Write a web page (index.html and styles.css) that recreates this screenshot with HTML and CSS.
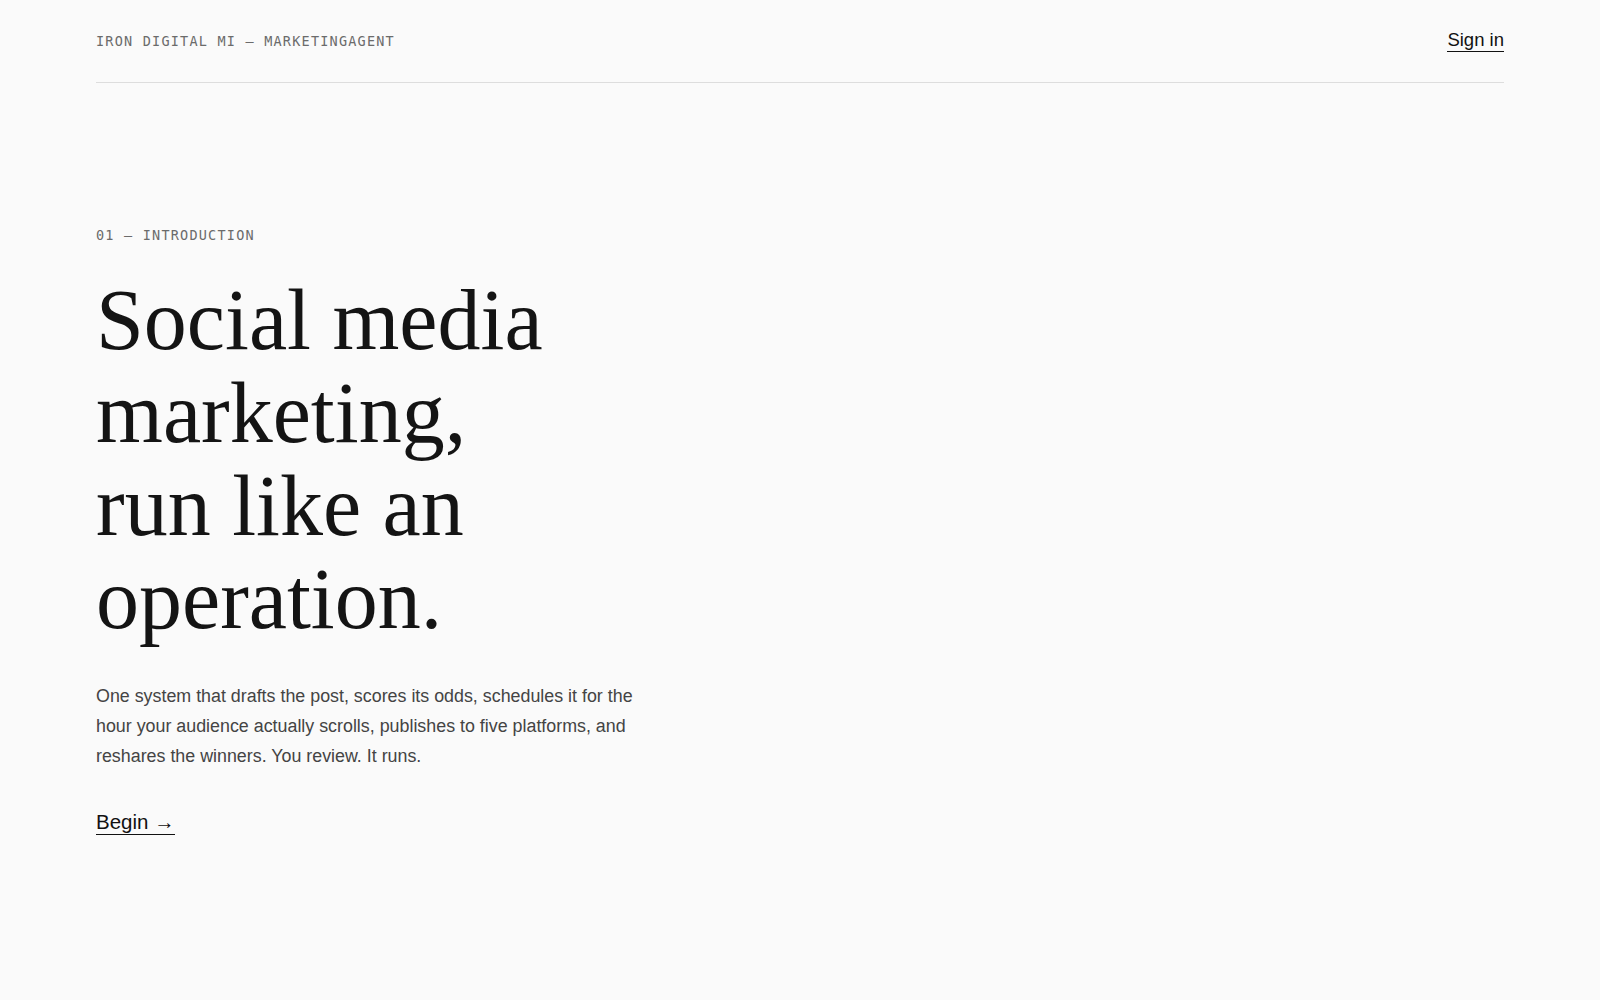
FILE: index.html
```html
<!DOCTYPE html>
<html lang="en">
<head>
<meta charset="utf-8">
<title>Iron Digital MI — Marketingagent</title>
<link rel="stylesheet" href="styles.css">
</head>
<body>
<div class="page">
  <header class="topbar">
    <div class="brand">IRON DIGITAL MI — MARKETINGAGENT</div>
    <a class="signin" href="#">Sign in</a>
  </header>
  <main class="hero">
    <div class="eyebrow">01 — INTRODUCTION</div>
    <h1 class="title">
      <span class="line">Social media</span>
      <span class="line">marketing,</span>
      <span class="line">run like an</span>
      <span class="line">operation.</span>
    </h1>
    <p class="lede">One system that drafts the post, scores its odds, schedules it for the hour your audience actually scrolls, publishes to five platforms, and reshares the winners. You review. It runs.</p>
    <div class="cta-row">
      <a class="cta" href="#">Begin <span class="arrow">→</span></a>
    </div>
  </main>
</div>
</body>
</html>
```

FILE: styles.css
```css
html, body {
  margin: 0;
  padding: 0;
  background: #fafafa;
}

body {
  font-family: "Liberation Sans", Arial, sans-serif;
  color: #111;
}

.page {
  padding: 0 96px;
}

.topbar {
  height: 82px;
  display: flex;
  align-items: center;
  justify-content: space-between;
  border-bottom: 1px solid #dddddd;
}

.brand {
  font-family: "DejaVu Sans Mono", "Liberation Mono", monospace;
  font-size: 13.5px;
  letter-spacing: 0.09em;
  color: #6b6b6b;
}

.signin {
  font-size: 18.5px;
  color: #111;
  text-decoration: none;
  border-bottom: 1px solid #111;
  line-height: normal;
  margin-top: -2px;
}

.hero {
  padding-top: 145px;
}

.eyebrow {
  font-family: "DejaVu Sans Mono", "Liberation Mono", monospace;
  font-size: 13.5px;
  letter-spacing: 0.09em;
  color: #6b6b6b;
  line-height: 15px;
}

.title {
  margin: 31px 0 0 0;
  font-family: "Liberation Serif", "Times New Roman", serif;
  font-weight: normal;
  font-size: 86px;
  line-height: 93px;
  color: #141414;
}

.title .line {
  display: block;
}

.lede {
  margin: 36px 0 0 0;
  max-width: 560px;
  font-size: 17.85px;
  line-height: 29.75px;
  color: #444;
}

.cta-row {
  display: flex;
  margin-top: 39px;
}

.cta {
  font-size: 20.5px;
  line-height: normal;
  color: #111;
  text-decoration: none;
  border-bottom: 1px solid #111;
}
```
